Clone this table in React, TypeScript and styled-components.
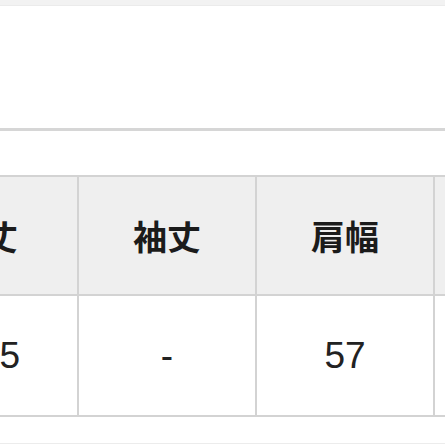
import styled, { createGlobalStyle } from 'styled-components';

const GlobalStyle = createGlobalStyle`
  html, body {
    margin: 0;
    padding: 0;
    background: #ffffff;
  }
  body {
    width: 445px;
    height: 445px;
    overflow: hidden;
    font-family: "Liberation Sans", "Noto Sans CJK JP", sans-serif;
  }
`;

const TopBar = styled.div`
  height: 5px;
  background-color: #f2f2f2;
  border-bottom: 1px solid #ebebeb;
`;

const Section = styled.div`
  height: 122px;
  background-color: #fff;
  border-bottom: 3px solid #d6d6d6;
`;

const TableArea = styled.div`
  padding-top: 44px;
  padding-bottom: 26px;
  overflow: hidden;
  border-bottom: 1px solid #ececec;
`;

const SizeTable = styled.table`
  margin-left: -111px;
  width: 722px;
  min-width: 722px;
  border-collapse: collapse;
  table-layout: fixed;

  th, td {
    border: 2px solid #d3d3d3;
    text-align: center;
    vertical-align: middle;
    padding: 0;
  }
`;

const Col = styled.col<{ $w: number }>`
  width: ${(p) => p.$w}px;
`;

const HeadCell = styled.th`
  height: 117px;
  background-color: #efefef;
  color: #1b1b1b;
  font-family: "Noto Sans CJK JP", "Liberation Sans", sans-serif;
  font-size: 34px;
  font-weight: 700;
`;

const ValueCell = styled.td`
  height: 119px;
  background-color: #fff;
  color: #222;
  font-size: 37px;
  font-weight: 400;
`;

const colWidths = [188, 178, 178, 178];
const headers = ['着丈', '袖丈', '肩幅', '身幅'];
const values = ['72.5', '-', '57', '60'];

function App() {
  return (
    <>
      <GlobalStyle />
      <TopBar />
      <Section />
      <TableArea>
        <SizeTable>
          <colgroup>
            {colWidths.map((w, i) => (
              <Col key={i} $w={w} />
            ))}
          </colgroup>
          <thead>
            <tr>
              {headers.map((h) => (
                <HeadCell key={h}>{h}</HeadCell>
              ))}
            </tr>
          </thead>
          <tbody>
            <tr>
              {values.map((v, i) => (
                <ValueCell key={i}>{v}</ValueCell>
              ))}
            </tr>
          </tbody>
        </SizeTable>
      </TableArea>
    </>
  );
}

export default App;
